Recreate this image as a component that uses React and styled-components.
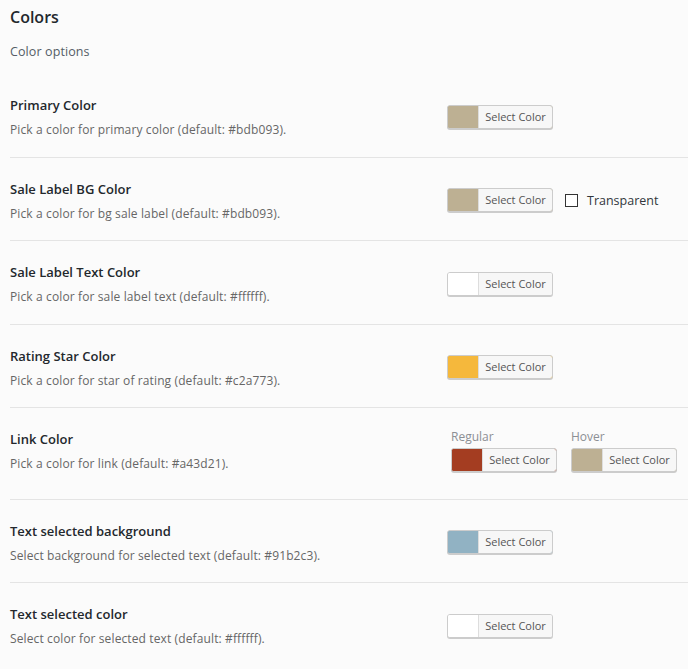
import React from "react";
import styled, { createGlobalStyle } from "styled-components";

const Global = createGlobalStyle`
  html, body { margin: 0; padding: 0; background: #fbfbfb; }
  body { font-family: "Open Sans", "Noto Sans", "DejaVu Sans", sans-serif; color: #23282d; }
`;

const Page = styled.div`
  padding: 5px 0 20px 10px;
`;

const Heading = styled.h2`
  margin: 0;
  font-size: 16px;
  line-height: 24px;
  font-weight: 600;
  color: #23282d;
`;

const Intro = styled.p`
  margin: 13px 0 12px;
  font-size: 12.5px;
  line-height: 20px;
  letter-spacing: 0.1px;
  color: #555d66;
`;

const Row = styled.div`
  display: flex;
  align-items: center;
  padding: ${(p) => (p.$tall ? "21px 0 24.5px" : "21px 0 16.5px")};
  border-bottom: ${(p) => (p.$last ? "none" : "1px solid #e4e4e4")};
`;

const Info = styled.div`
  width: 437px;
  flex: none;
  display: flex;
  flex-direction: column;
  gap: 5px;
`;

const Title = styled.div`
  font-size: 13px;
  line-height: 20px;
  font-weight: 600;
  color: #23282d;
`;

const Desc = styled.div`
  font-size: 12px;
  line-height: 20px;
  letter-spacing: 0.12px;
  color: #666;
`;

const Controls = styled.div`
  display: flex;
  align-items: center;
  padding-bottom: 2px;
`;

const Group = styled.div`
  display: flex;
  flex-direction: column;
  gap: 4px;
  margin-left: ${(p) => p.$indent || 0}px;
`;

const GroupLabel = styled.span`
  font-size: 12px;
  line-height: 15px;
  color: #8c8f94;
`;

const ColorButton = styled.button`
  display: flex;
  align-items: stretch;
  height: 24px;
  width: 106px;
  padding: 0;
  border: 1px solid #ccc;
  border-radius: 3px;
  box-shadow: 0 1px 0 #ccc;
  background: ${(p) => p.$color};
  overflow: hidden;
  cursor: pointer;
  box-sizing: border-box;
  font-family: inherit;
`;

const Swatch = styled.span`
  width: 30px;
  flex: none;
  background: ${(p) => p.$color};
`;

const ButtonText = styled.span`
  flex: 1;
  border-left: 1px solid #ddd;
  background: #f7f7f7;
  color: #555;
  font-size: 11px;
  line-height: 22px;
  text-align: center;
  white-space: nowrap;
`;

const Check = styled.label`
  display: flex;
  align-items: center;
  margin-left: 12px;
  font-size: 12.5px;
  color: #32373c;
  gap: 9px;
`;

const Box = styled.span`
  width: 11px;
  height: 11px;
  border: 1px solid #333;
  background: #fff;
`;

function Picker({ color }) {
  return (
    <ColorButton $color={color}>
      <Swatch $color={color} />
      <ButtonText>Select Color</ButtonText>
    </ColorButton>
  );
}

const rows = [
  { t: "Primary Color", d: "Pick a color for primary color (default: #bdb093).", c: "#bdb093" },
  { t: "Sale Label BG Color", d: "Pick a color for bg sale label (default: #bdb093).", c: "#bdb093", transparent: true },
  { t: "Sale Label Text Color", d: "Pick a color for sale label text (default: #ffffff).", c: "#ffffff" },
  { t: "Rating Star Color", d: "Pick a color for star of rating (default: #c2a773).", c: "#f5b83c" },
  { t: "Link Color", d: "Pick a color for link (default: #a43d21).", link: true },
  { t: "Text selected background", d: "Select background for selected text (default: #91b2c3).", c: "#91b2c3" },
  { t: "Text selected color", d: "Select color for selected text (default: #ffffff).", c: "#ffffff" },
];

export default function App() {
  return (
    <Page>
      <Global />
      <Heading>Colors</Heading>
      <Intro>Color options</Intro>
      {rows.map((r, i) => (
        <Row key={r.t} $tall={r.link} $last={i === rows.length - 1}>
          <Info>
            <Title>{r.t}</Title>
            <Desc>{r.d}</Desc>
          </Info>
          <Controls>
            {r.link ? (
              <>
                <Group $indent={4}>
                  <GroupLabel>Regular</GroupLabel>
                  <Picker color="#a43d21" />
                </Group>
                <Group $indent={14}>
                  <GroupLabel>Hover</GroupLabel>
                  <Picker color="#bdb093" />
                </Group>
              </>
            ) : (
              <>
                <Picker color={r.c} />
                {r.transparent && (
                  <Check>
                    <Box />
                    Transparent
                  </Check>
                )}
              </>
            )}
          </Controls>
        </Row>
      ))}
    </Page>
  );
}
